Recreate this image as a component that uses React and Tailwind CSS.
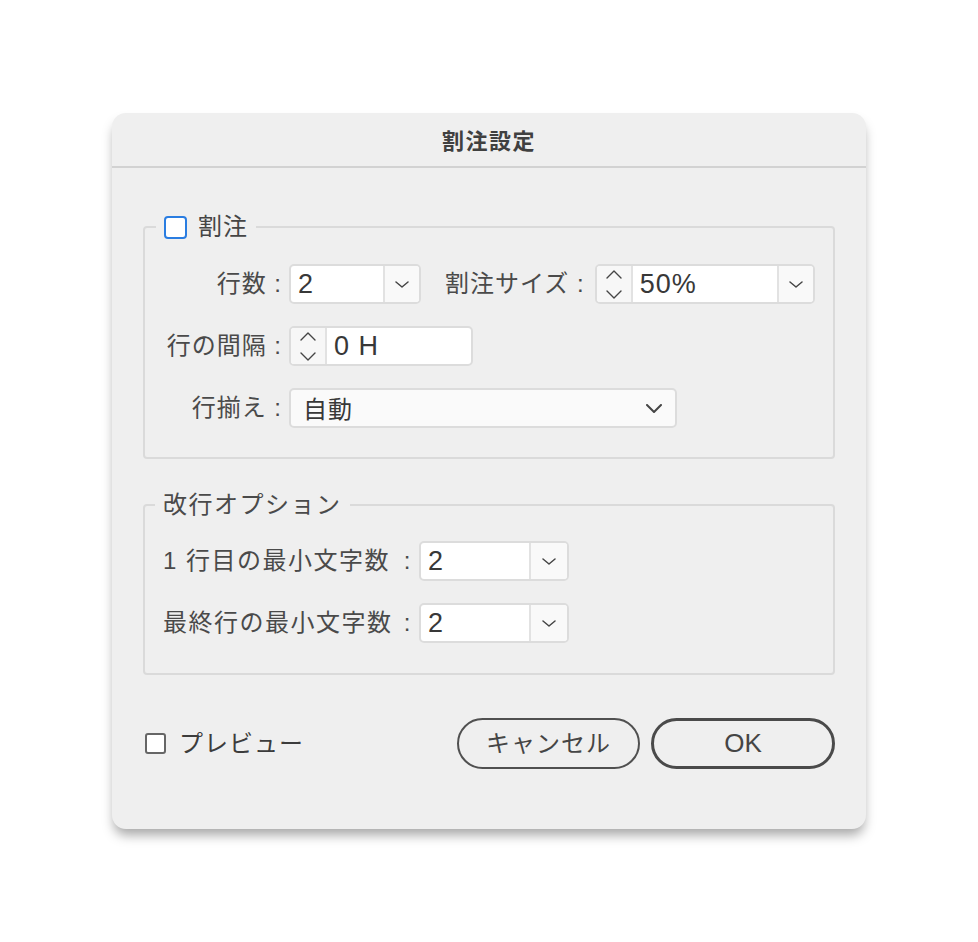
import React from 'react';

const Chevron = ({ w = 14, h = 7, sw = 1.6, up = false }) => (
  <svg width={w} height={h} viewBox={`0 0 ${w} ${h}`} fill="none">
    <path
      d={up ? `M1 ${h - 1} L${w / 2} 1 L${w - 1} ${h - 1}` : `M1 1 L${w / 2} ${h - 1} L${w - 1} 1`}
      stroke="#454545"
      strokeWidth={sw}
      strokeLinecap="round"
      strokeLinejoin="round"
    />
  </svg>
);

const Spinner = () => (
  <div className="w-[36px] h-full bg-[#f7f7f7] border-r-2 border-[#e2e2e2] flex flex-col items-center justify-center gap-[11px]">
    <Chevron w={16} h={9} sw={1.4} up />
    <Chevron w={16} h={9} sw={1.4} />
  </div>
);

const DropBtn = ({ w = 'w-[36px]' }) => (
  <div className={`${w} h-full bg-[#f9f9f9] border-l-2 border-[#e2e2e2] flex items-center justify-center`}>
    <Chevron w={14} h={7} sw={1.5} />
  </div>
);

const Box = ({ className = '', children }) => (
  <div className={`h-[40px] flex items-stretch border-2 border-[#dcdcdc] rounded-[5px] bg-white overflow-hidden ${className}`}>
    {children}
  </div>
);

const Value = ({ children }) => (
  <div className="flex-1 flex items-center pl-[7px] text-[27px] text-[#383838] leading-none">{children}</div>
);

export default function App() {
  return (
    <div className="w-[978px] min-h-[942px] bg-white pt-[113px] pl-[112px] font-['Liberation_Sans','Noto_Sans_CJK_JP',sans-serif]">
      <div className="w-[754px] h-[716px] rounded-[14px] bg-[#efefef] shadow-[0_8px_12px_-2px_rgba(0,0,0,0.35)] flex flex-col">
        {/* Title */}
        <div className="h-[55px] border-b-2 border-[#d2d2d2] flex items-center justify-center">
          <span className="text-[22px] font-bold text-[#404040] tracking-[1.5px] font-['Noto_Sans_CJK_JP',sans-serif]">割注設定</span>
        </div>

        <div className="px-[31px] pt-[45px] flex flex-col">
          {/* Group 1 */}
          <fieldset className="border-2 border-[#dadada] rounded-[4px]">
            <legend className="ml-[11px] px-[8px] h-[28px] flex items-center gap-[11px]">
              <span className="w-[23px] h-[23px] rounded-[4px] border-2 border-[#2a7de1] bg-white" />
              <span className="text-[24px] text-[#454545] tracking-[1px] leading-none">割注</span>
            </legend>
            <div className="pl-[18px] pt-[23px] pb-[29px] flex flex-col gap-[22px] text-[24px] text-[#4a4a4a] tracking-[1px]">
              <div className="flex items-center">
                <span className="w-[119px] text-right whitespace-nowrap">行数 :</span>
                <Box className="ml-[7px] w-[132px]">
                  <Value>2</Value>
                  <DropBtn />
                </Box>
                <span className="ml-[24px] whitespace-nowrap">割注サイズ :</span>
                <Box className="ml-[10px] w-[220px]">
                  <Spinner />
                  <Value>50%</Value>
                  <DropBtn />
                </Box>
              </div>
              <div className="flex items-center">
                <span className="w-[119px] text-right whitespace-nowrap">行の間隔 :</span>
                <Box className="ml-[7px] w-[184px]">
                  <Spinner />
                  <Value>0 H</Value>
                </Box>
              </div>
              <div className="flex items-center">
                <span className="w-[119px] text-right whitespace-nowrap">行揃え :</span>
                <div className="ml-[7px] w-[388px] h-[40px] border-2 border-[#dcdcdc] rounded-[5px] bg-[#fafafa] flex items-center justify-between pl-[12px] pr-[13px]">
                  <span className="text-[24px] text-[#383838] font-['Noto_Sans_CJK_JP',sans-serif]">自動</span>
                  <Chevron w={16} h={9} sw={2} />
                </div>
              </div>
            </div>
          </fieldset>

          {/* Group 2 */}
          <fieldset className="mt-[32px] border-2 border-[#dadada] rounded-[4px]">
            <legend className="ml-[10px] px-[8px] h-[28px] flex items-center">
              <span className="text-[24px] text-[#4a4a4a] tracking-[1.5px] leading-none">改行オプション</span>
            </legend>
            <div className="pl-[18px] pt-[22px] pb-[30px] flex flex-col gap-[22px] text-[24px] text-[#4a4a4a] tracking-[1.5px]">
              <div className="flex items-center">
                <span className="w-[249px] whitespace-nowrap flex justify-between">
                  <span>1 行目の最小文字数</span>
                  <span>:</span>
                </span>
                <Box className="ml-[7px] w-[150px]">
                  <Value>2</Value>
                  <DropBtn w="w-[38px]" />
                </Box>
              </div>
              <div className="flex items-center">
                <span className="w-[249px] whitespace-nowrap flex justify-between">
                  <span>最終行の最小文字数</span>
                  <span>:</span>
                </span>
                <Box className="ml-[7px] w-[150px]">
                  <Value>2</Value>
                  <DropBtn w="w-[38px]" />
                </Box>
              </div>
            </div>
          </fieldset>

          {/* Footer */}
          <div className="mt-[43px] flex items-center">
            <span className="ml-[2px] w-[21px] h-[21px] rounded-[3px] border-2 border-[#666666] bg-white" />
            <span className="ml-[13px] text-[24px] text-[#3c3c3c] tracking-[1px]">プレビュー</span>
            <div className="ml-auto flex items-center gap-[11px]">
              <button className="w-[183px] h-[51px] rounded-full border-2 border-[#505050] text-[24px] text-[#454545] tracking-[1px]">
                キャンセル
              </button>
              <button className="w-[184px] h-[51px] rounded-full border-[3px] border-[#4a4a4a] text-[26px] text-[#454545]">
                OK
              </button>
            </div>
          </div>
        </div>
      </div>
    </div>
  );
}
